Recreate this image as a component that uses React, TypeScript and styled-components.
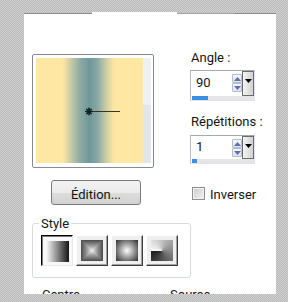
import React from "react";
import styled, { createGlobalStyle, css } from "styled-components";

const GlobalStyle = createGlobalStyle`
  html, body { margin: 0; padding: 0; }
  body {
    width: 288px;
    height: 302px;
    overflow: hidden;
    background-color: #c5c5c5;
    background-image: repeating-conic-gradient(#bbbbbb 0 25%, #cfcfcf 0 50%);
    background-size: 2px 2px;
    font-family: Roboto, "Liberation Sans", sans-serif;
    font-size: 13px;
    line-height: 15px;
    color: #141414;
  }
`;

const Page = styled.div`
  padding: 13px 12px 0 24px;
`;

const Panel = styled.div`
  width: 252px;
  background: #ffffff;
  display: flex;
  flex-direction: column;
`;

const TabRow = styled.div`
  display: flex;
  height: 1px;
`;

const TabRule = styled.div<{ $w?: number; $c?: string }>`
  height: 1px;
  background: ${(p) => p.$c ?? "#8a8a8a"};
  ${(p) => (p.$w ? css`flex: 0 0 ${p.$w}px;` : css`flex: 1;`)}
`;

const ActiveTab = styled.div`
  flex: 0 0 85px;
  height: 2px;
  margin-top: -1px;
  background: #ffffff;
`;

const Body = styled.div`
  padding: 36px 0 0 8px;
  display: flex;
  flex-direction: column;
`;

const Row = styled.div<{ $mt?: number }>`
  display: grid;
  grid-template-columns: 158px 1fr;
  align-items: start;
  margin-top: ${(p) => p.$mt ?? 0}px;
`;

const Preview = styled.div`
  margin-top: 4px;
  width: 122px;
  height: 114px;
  box-sizing: border-box;
  border: 1px solid #858a90;
  border-radius: 2px;
  padding: 3px 2px 4px 3px;
  display: flex;
`;

const Swatch = styled.div`
  position: relative;
  flex: 0 0 107px;
  background: linear-gradient(
    to right,
    #fee6a3 0%,
    #fee6a3 25%,
    #f4e0a2 27%,
    #ddd6a3 30%,
    #c4cba5 33%,
    #aebea6 36%,
    #9cb4a5 39%,
    #8aa9a2 42%,
    #7ca09f 46%,
    #6f9899 50%,
    #7ca09f 54%,
    #8caba3 58%,
    #a5baa6 61%,
    #bcc6a5 64%,
    #d6d3a3 67%,
    #ebdca2 70%,
    #fae4a2 72%,
    #fee6a3 74%,
    #fee6a3 100%
  );
`;

const Marker = styled.svg`
  position: absolute;
  left: 49px;
  top: 49px;
`;

const Scroll = styled.div`
  flex: 0 0 8px;
  background: linear-gradient(to bottom, #eef0f3 0%, #eef0f3 45%, #e2e5e9 45%, #e2e5e9 100%);
`;

const FieldStack = styled.div`
  display: flex;
  flex-direction: column;
  gap: 13px;
`;

const Field = styled.div<{ $gap: number }>`
  display: flex;
  flex-direction: column;
  gap: ${(p) => p.$gap}px;
`;

const Label = styled.div`
  padding-left: 1px;
  white-space: nowrap;
`;

const SpinBox = styled.div`
  width: 65px;
  box-sizing: border-box;
  border: 1px solid #e0e4ea;
  border-top-color: #a6a9b0;
  border-left-color: #b8bcc3;
  display: flex;
  flex-direction: column;
  background: #ffffff;
`;

const SpinTop = styled.div<{ $h: number }>`
  height: ${(p) => p.$h}px;
  display: flex;
`;

const SpinValue = styled.div<{ $pt: number }>`
  flex: 1;
  padding: ${(p) => p.$pt}px 0 0 5px;
`;

const ArrowCol = styled.div`
  flex: 0 0 10px;
  display: flex;
  flex-direction: column;
  padding-top: 3px;
`;

const ArrowBtn = styled.div`
  height: 9px;
  box-sizing: border-box;
  border: 1px solid #b4bccb;
  border-radius: 1px;
  background: linear-gradient(#f6f8fb, #dde3ed);
  display: flex;
  align-items: center;
  justify-content: center;
`;

const DropBtn = styled.div`
  flex: 0 0 12px;
  box-sizing: border-box;
  border: 1px solid #6c6c6c;
  background: linear-gradient(to right, #f4f4f4, #d2d2d2);
  display: flex;
  justify-content: center;
  padding-top: 7px;
`;

const Track = styled.div`
  height: 4px;
  margin-left: 1px;
  background: #e6e6e6;
  display: flex;
`;

const TrackFill = styled.div`
  background: #3b8fe2;
  height: 100%;
`;

const PushButton = styled.div`
  margin-left: 19px;
  width: 90px;
  height: 25px;
  box-sizing: border-box;
  border: 1px solid #7a7a7a;
  border-radius: 3px;
  background: linear-gradient(#f3f3f3 0%, #ebebeb 50%, #dddddd 51%, #d2d2d2 100%);
  display: flex;
  align-items: center;
  justify-content: center;
  padding-top: 4px;
`;

const CheckRow = styled.div`
  display: flex;
  align-items: flex-start;
  gap: 5px;
  padding-top: 7px;
  margin-left: 2px;
`;

const CheckBox = styled.div`
  flex: 0 0 13px;
  height: 13px;
  box-sizing: border-box;
  border: 1px solid #8e8f8f;
  background: linear-gradient(135deg, #cbcbcb, #f4f4f4);
  box-shadow: inset 0 0 0 1px #f2f2f2;
`;

const GroupBox = styled.fieldset`
  margin: 11px 0 0 0;
  width: 159px;
  box-sizing: border-box;
  border: 1px solid #d5dbe0;
  border-radius: 3px;
  padding: 4px 0 11px 8px;
  min-inline-size: 0;
`;

const Legend = styled.legend`
  padding: 0 2px;
  margin-left: -2px;
  line-height: 15px;
`;

const StyleButtons = styled.div`
  display: flex;
  gap: 3px;
`;

const StyleBtn = styled.div<{ $pressed?: boolean }>`
  width: 32px;
  height: 31px;
  box-sizing: border-box;
  display: flex;
  align-items: center;
  justify-content: center;
  border: 1px solid;
  ${(p) =>
    p.$pressed
      ? css`
          border-color: #000000 #e8e8e8 #e8e8e8 #000000;
          box-shadow: inset 1px 1px 0 #7a7a7a;
          background: #f8f8f8;
          padding: 1px 0 0 1px;
        `
      : css`
          border-color: #ffffff #3c3c3c #3c3c3c #ffffff;
          box-shadow: inset -1px -1px 0 #a0a0a0;
          background: #efefef;
        `}
`;

const GradIcon = styled.div<{ $kind: "linear" | "radial" | "conic" }>`
  width: 22px;
  height: 21px;
  background: ${(p) =>
    p.$kind === "linear"
      ? "linear-gradient(to right, #f2f2f2, #151515)"
      : p.$kind === "radial"
      ? "radial-gradient(circle farthest-corner at 50% 50%, #ffffff 0%, #aaaaaa 40%, #2a2a2a 100%)"
      : "conic-gradient(from 270deg at 50% 50%, #f8f8f8, #1a1a1a)"};
`;

const Footer = styled.div`
  margin-top: 9px;
  height: 7px;
  overflow: hidden;
  display: grid;
  grid-template-columns: 128px auto;
  padding-left: 10px;
`;

const UpArrow = () => (
  <svg width="7" height="4" viewBox="0 0 7 4">
    <polygon points="0,4 3.5,0 7,4" fill="#5d6fb3" />
  </svg>
);

const DownArrow = ({ color = "#5d6fb3", w = 7, h = 4 }: { color?: string; w?: number; h?: number }) => (
  <svg width={w} height={h} viewBox={`0 0 ${w} ${h}`}>
    <polygon points={`0,0 ${w},0 ${w / 2},${h}`} fill={color} />
  </svg>
);

const SquareGradIcon = () => (
  <svg width="22" height="21" viewBox="0 0 22 21">
    <defs>
      <linearGradient id="sgT" gradientUnits="userSpaceOnUse" x1="0" y1="0" x2="0" y2="10.5">
        <stop offset="0" stopColor="#4a4a4a" />
        <stop offset="0.6" stopColor="#a4a4a4" />
        <stop offset="1" stopColor="#eeeeee" />
      </linearGradient>
      <linearGradient id="sgB" gradientUnits="userSpaceOnUse" x1="0" y1="21" x2="0" y2="10.5">
        <stop offset="0" stopColor="#4a4a4a" />
        <stop offset="0.6" stopColor="#a4a4a4" />
        <stop offset="1" stopColor="#eeeeee" />
      </linearGradient>
      <linearGradient id="sgL" gradientUnits="userSpaceOnUse" x1="0" y1="0" x2="11" y2="0">
        <stop offset="0" stopColor="#4a4a4a" />
        <stop offset="0.6" stopColor="#a4a4a4" />
        <stop offset="1" stopColor="#eeeeee" />
      </linearGradient>
      <linearGradient id="sgR" gradientUnits="userSpaceOnUse" x1="22" y1="0" x2="11" y2="0">
        <stop offset="0" stopColor="#4a4a4a" />
        <stop offset="0.6" stopColor="#a4a4a4" />
        <stop offset="1" stopColor="#eeeeee" />
      </linearGradient>
    </defs>
    <polygon points="0,-1 0,22 11.6,10.5" fill="url(#sgL)" />
    <polygon points="22,-1 22,22 10.4,10.5" fill="url(#sgR)" />
    <polygon points="0,0 22,0 11,10.5" fill="url(#sgT)" />
    <polygon points="0,21 22,21 11,10.5" fill="url(#sgB)" />
  </svg>
);

type SpinProps = { value: string; fill: number; rowH: number; pt: number };

const Spin = ({ value, fill, rowH, pt }: SpinProps) => (
  <SpinBox>
    <SpinTop $h={rowH}>
      <SpinValue $pt={pt}>{value}</SpinValue>
      <ArrowCol>
        <ArrowBtn>
          <UpArrow />
        </ArrowBtn>
        <ArrowBtn>
          <DownArrow />
        </ArrowBtn>
      </ArrowCol>
      <DropBtn>
        <DownArrow color="#000000" w={7} h={4} />
      </DropBtn>
    </SpinTop>
    <Track>
      <TrackFill style={{ width: `${fill}px` }} />
    </Track>
  </SpinBox>
);

export default function App() {
  return (
    <>
      <GlobalStyle />
      <Page>
        <Panel>
          <TabRow>
            <TabRule $w={68} />
            <ActiveTab />
            <TabRule $w={58} $c="#a3a3a3" />
            <TabRule />
          </TabRow>
          <Body>
            <Row>
              <Preview>
                <Swatch>
                  <Marker width="40" height="9" viewBox="0 0 40 9">
                    <line x1="6" y1="4.5" x2="35" y2="4.5" stroke="#3a3419" strokeWidth="1" />
                    <g stroke="#0f2222" strokeWidth="1.6" strokeLinecap="round">
                      <line x1="0.8" y1="4.5" x2="7.2" y2="4.5" />
                      <line x1="4" y1="1.3" x2="4" y2="7.7" />
                      <line x1="1.8" y1="2.3" x2="6.2" y2="6.7" />
                      <line x1="6.2" y1="2.3" x2="1.8" y2="6.7" />
                    </g>
                  </Marker>
                </Swatch>
                <Scroll />
              </Preview>
              <FieldStack>
                <Field $gap={5}>
                  <Label>Angle&nbsp;:</Label>
                  <Spin value="90" fill={16} rowH={25} pt={4} />
                </Field>
                <Field $gap={6}>
                  <Label>Répétitions&nbsp;:</Label>
                  <Spin value="1" fill={5} rowH={23} pt={3} />
                </Field>
              </FieldStack>
            </Row>
            <Row $mt={12}>
              <PushButton>Édition...</PushButton>
              <CheckRow>
                <CheckBox />
                <span>Inverser</span>
              </CheckRow>
            </Row>
            <GroupBox>
              <Legend>Style</Legend>
              <StyleButtons>
                <StyleBtn $pressed>
                  <GradIcon $kind="linear" />
                </StyleBtn>
                <StyleBtn>
                  <SquareGradIcon />
                </StyleBtn>
                <StyleBtn>
                  <GradIcon $kind="radial" />
                </StyleBtn>
                <StyleBtn>
                  <GradIcon $kind="conic" />
                </StyleBtn>
              </StyleButtons>
            </GroupBox>
            <Footer>
              <span>Centre</span>
              <span>Source</span>
            </Footer>
          </Body>
        </Panel>
      </Page>
    </>
  );
}
